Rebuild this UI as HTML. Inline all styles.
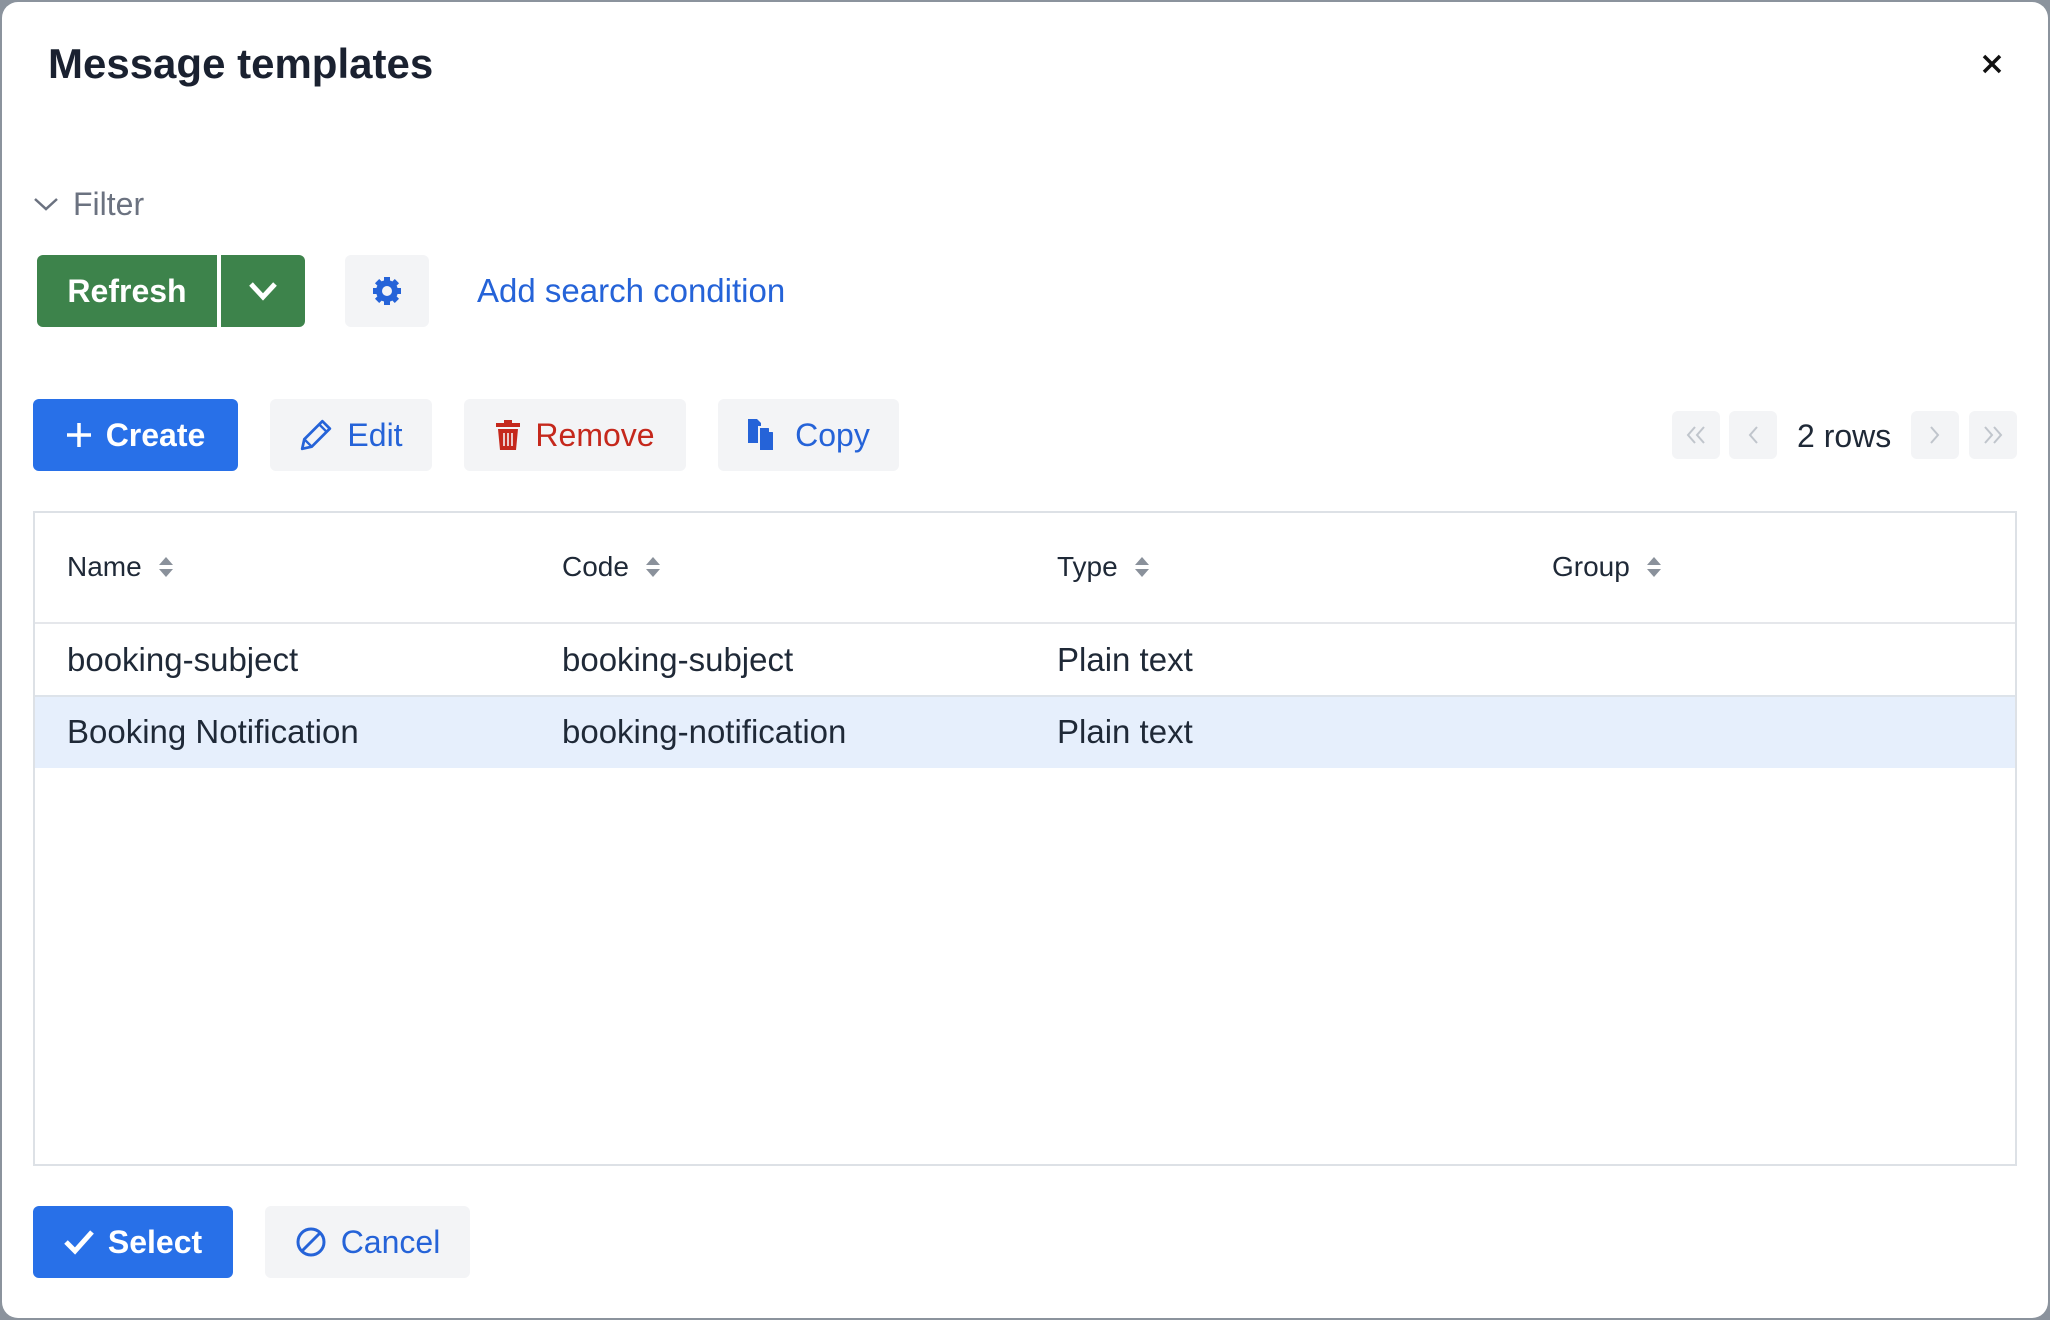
<!DOCTYPE html>
<html><head><meta charset="utf-8"><style>
*{box-sizing:border-box;margin:0;padding:0}
html,body{width:2050px;height:1320px;overflow:hidden;background:#8b939d;font-family:"Liberation Sans",Arial,sans-serif;color:#1f2937}
.dlg{position:absolute;left:2px;top:2px;width:2046px;height:1316px;background:#fff;border-radius:16px}
.abs{position:absolute}
.btn{position:absolute;border-radius:6px;display:flex;align-items:center;justify-content:center;font-size:32px;gap:14px}
.lt{background:#f3f4f6;color:#2563d8}
.th{position:absolute;top:551px;font-size:28px;color:#1f2937;display:flex;align-items:center;gap:16px}
.td{position:absolute;font-size:33px;color:#1f2937}
.pg{position:absolute;top:411px;width:48px;height:48px;background:#f3f4f6;border-radius:6px;display:flex;align-items:center;justify-content:center}
</style></head><body>
<div class="dlg"></div>
<div class="abs" style="left:48px;top:40px;font-size:42px;font-weight:700;color:#1a2130">Message templates</div>
<svg class="abs" style="left:1981px;top:53px" width="22" height="22" viewBox="0 0 22 22"><path d="M3 3L19 19M19 3L3 19" stroke="#111" stroke-width="3.5"/></svg>
<svg class="abs" style="left:33px;top:196px" width="26" height="16" viewBox="0 0 26 16"><path d="M2 3L13 13L24 3" fill="none" stroke="#6b7280" stroke-width="2.5"/></svg>
<div class="abs" style="left:73px;top:186px;font-size:32px;color:#6b7280">Filter</div>
<div class="btn" style="left:37px;top:255px;width:180px;height:72px;background:#3d834b;color:#fff;border-radius:6px 0 0 6px;font-weight:700">Refresh</div>
<div class="btn" style="left:221px;top:255px;width:84px;height:72px;background:#3d834b;border-radius:0 6px 6px 0"><svg width="30" height="20" viewBox="0 0 30 20"><path d="M3 3L15 16L27 3" fill="none" stroke="#fff" stroke-width="5"/></svg></div>
<div class="btn lt" style="left:345px;top:255px;width:84px;height:72px"><svg width="32" height="32" viewBox="0 0 32 32"><g fill="#2563d8"><circle cx="16" cy="16" r="11"/><rect x="13" y="2" width="6" height="28"/><rect x="2" y="13" width="28" height="6"/><rect x="13" y="2" width="6" height="28" transform="rotate(45 16 16)"/><rect x="13" y="2" width="6" height="28" transform="rotate(-45 16 16)"/></g><circle cx="16" cy="16" r="5" fill="#f3f4f6"/></svg></div>
<div class="abs" style="left:477px;top:272px;font-size:33px;color:#2563d8">Add search condition</div>

<div class="btn" style="left:33px;top:399px;width:205px;height:72px;background:#2870e8;color:#fff;font-weight:700"><svg width="26" height="26" viewBox="0 0 26 26"><path d="M13 1V25M1 13H25" stroke="#fff" stroke-width="3.5"/></svg>Create</div>
<div class="btn lt" style="left:270px;top:399px;width:162px;height:72px"><svg width="34" height="34" viewBox="0 0 32 32"><path d="M3 29L5 20L22 3L29 10L12 27Z" fill="none" stroke="#2563d8" stroke-width="2.6" stroke-linejoin="round"/><path d="M19 6L26 13M5 20L12 27" stroke="#2563d8" stroke-width="2.2"/></svg>Edit</div>
<div class="btn" style="left:464px;top:399px;width:222px;height:72px;background:#f3f4f6;color:#c5281c"><svg width="26" height="32" viewBox="0 0 26 32"><path d="M9 1H17V4H25V8H1V4H9Z" fill="#c5281c"/><path d="M3 10H23L21 31H5Z" fill="#c5281c"/><path d="M9 14V27M13 14V27M17 14V27" stroke="#f3f4f6" stroke-width="1.6"/></svg>Remove</div>
<div class="btn lt" style="left:718px;top:399px;width:181px;height:72px"><svg width="34" height="34" viewBox="0 0 34 34"><path d="M1 1H10L14 5V25H1Z" fill="#2563d8"/><path d="M12 9H22L27 14V33H12Z" fill="#2563d8" stroke="#f3f4f6" stroke-width="2"/><path d="M22 9V14H27" fill="#f3f4f6"/></svg>Copy</div>

<div class="pg" style="left:1672px"><svg width="22" height="20" viewBox="0 0 22 20"><path d="M10 2L3 10L10 18M19 2L12 10L19 18" fill="none" stroke="#c0c5cc" stroke-width="2"/></svg></div>
<div class="pg" style="left:1729px"><svg width="12" height="20" viewBox="0 0 12 20"><path d="M10 2L3 10L10 18" fill="none" stroke="#c0c5cc" stroke-width="2"/></svg></div>
<div class="abs" style="left:1797px;top:418px;font-size:32px;color:#1f2937">2 rows</div>
<div class="pg" style="left:1911px"><svg width="12" height="20" viewBox="0 0 12 20"><path d="M2 2L9 10L2 18" fill="none" stroke="#c0c5cc" stroke-width="2"/></svg></div>
<div class="pg" style="left:1969px"><svg width="22" height="20" viewBox="0 0 22 20"><path d="M3 2L10 10L3 18M12 2L19 10L12 18" fill="none" stroke="#c0c5cc" stroke-width="2"/></svg></div>

<div class="abs" style="left:33px;top:511px;width:1984px;height:655px;border:2px solid #dde1e6"></div>
<div class="abs" style="left:35px;top:622px;width:1980px;height:2px;background:#e5e7eb"></div>
<div class="abs" style="left:35px;top:695px;width:1980px;height:2px;background:#dde3ea"></div>
<div class="abs" style="left:35px;top:697px;width:1980px;height:71px;background:#e6effc"></div>
<svg width="0" height="0" style="position:absolute"><defs><g id="s"><path d="M1 9L8 1L15 9Z M1 13L8 21L15 13Z" fill="#8a919b"/></g></defs></svg>
<div class="th" style="left:67px">Name <svg width="16" height="22"><use href="#s"/></svg></div>
<div class="th" style="left:562px">Code <svg width="16" height="22"><use href="#s"/></svg></div>
<div class="th" style="left:1057px">Type <svg width="16" height="22"><use href="#s"/></svg></div>
<div class="th" style="left:1552px">Group <svg width="16" height="22"><use href="#s"/></svg></div>
<div class="td" style="left:67px;top:641px">booking-subject</div>
<div class="td" style="left:562px;top:641px">booking-subject</div>
<div class="td" style="left:1057px;top:641px">Plain text</div>
<div class="td" style="left:67px;top:713px">Booking Notification</div>
<div class="td" style="left:562px;top:713px">booking-notification</div>
<div class="td" style="left:1057px;top:713px">Plain text</div>

<div class="btn" style="left:33px;top:1206px;width:200px;height:72px;background:#2870e8;color:#fff;font-weight:700"><svg width="30" height="26" viewBox="0 0 30 26"><path d="M2 13L11 22L28 3" fill="none" stroke="#fff" stroke-width="5"/></svg>Select</div>
<div class="btn lt" style="left:265px;top:1206px;width:205px;height:72px"><svg width="32" height="32" viewBox="0 0 32 32"><circle cx="16" cy="16" r="13" fill="none" stroke="#2563d8" stroke-width="3"/><path d="M7 25L25 7" stroke="#2563d8" stroke-width="3"/></svg>Cancel</div>
</body></html>
